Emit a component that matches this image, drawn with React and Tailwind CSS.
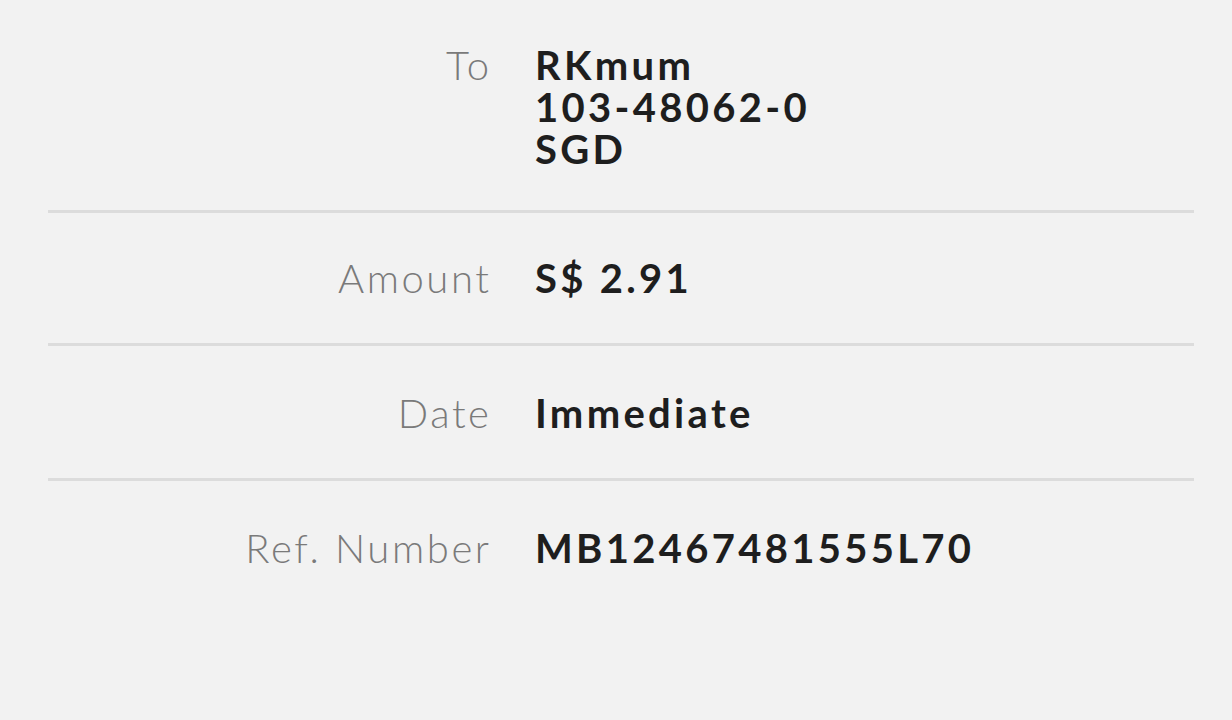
export default function App() {
  const rows = [
    { label: "To", value: ["RKmum", "103-48062-0", "SGD"], pad: "pt-[44px] pb-[40px]" },
    { label: "Amount", value: ["S$ 2.91"], pad: "pt-[44px] pb-[44px]" },
    { label: "Date", value: ["Immediate"], pad: "pt-[46px] pb-[44px]" },
    { label: "Ref. Number", value: ["MB12467481555L70"], pad: "pt-[46px] pb-[44px]" },
  ];
  return (
    <div className="w-[1232px] h-[720px] bg-[#f2f2f2] pl-[48px] pr-[38px] overflow-hidden" style={{ fontFamily: "Lato, 'Open Sans', sans-serif" }}>
      {rows.map((r, i) => (
        <div key={i} className={`flex items-start gap-[46px] ${r.pad} ${i < rows.length - 1 ? "border-b-[3px] border-[#dcdcdc]" : ""}`}>
          <div className="w-[441px] shrink-0 text-right">
            <span className="inline-block mr-[-2.6px] text-[40px] leading-[42px] font-light tracking-[2.6px] text-[#7a7a7a]">{r.label}</span>
          </div>
          <div className="text-[40px] leading-[42px] font-bold tracking-[3.3px] text-[#1e1e1e]">
            {r.value.map((v, j) => (
              <div key={j}>{v}</div>
            ))}
          </div>
        </div>
      ))}
    </div>
  );
}
